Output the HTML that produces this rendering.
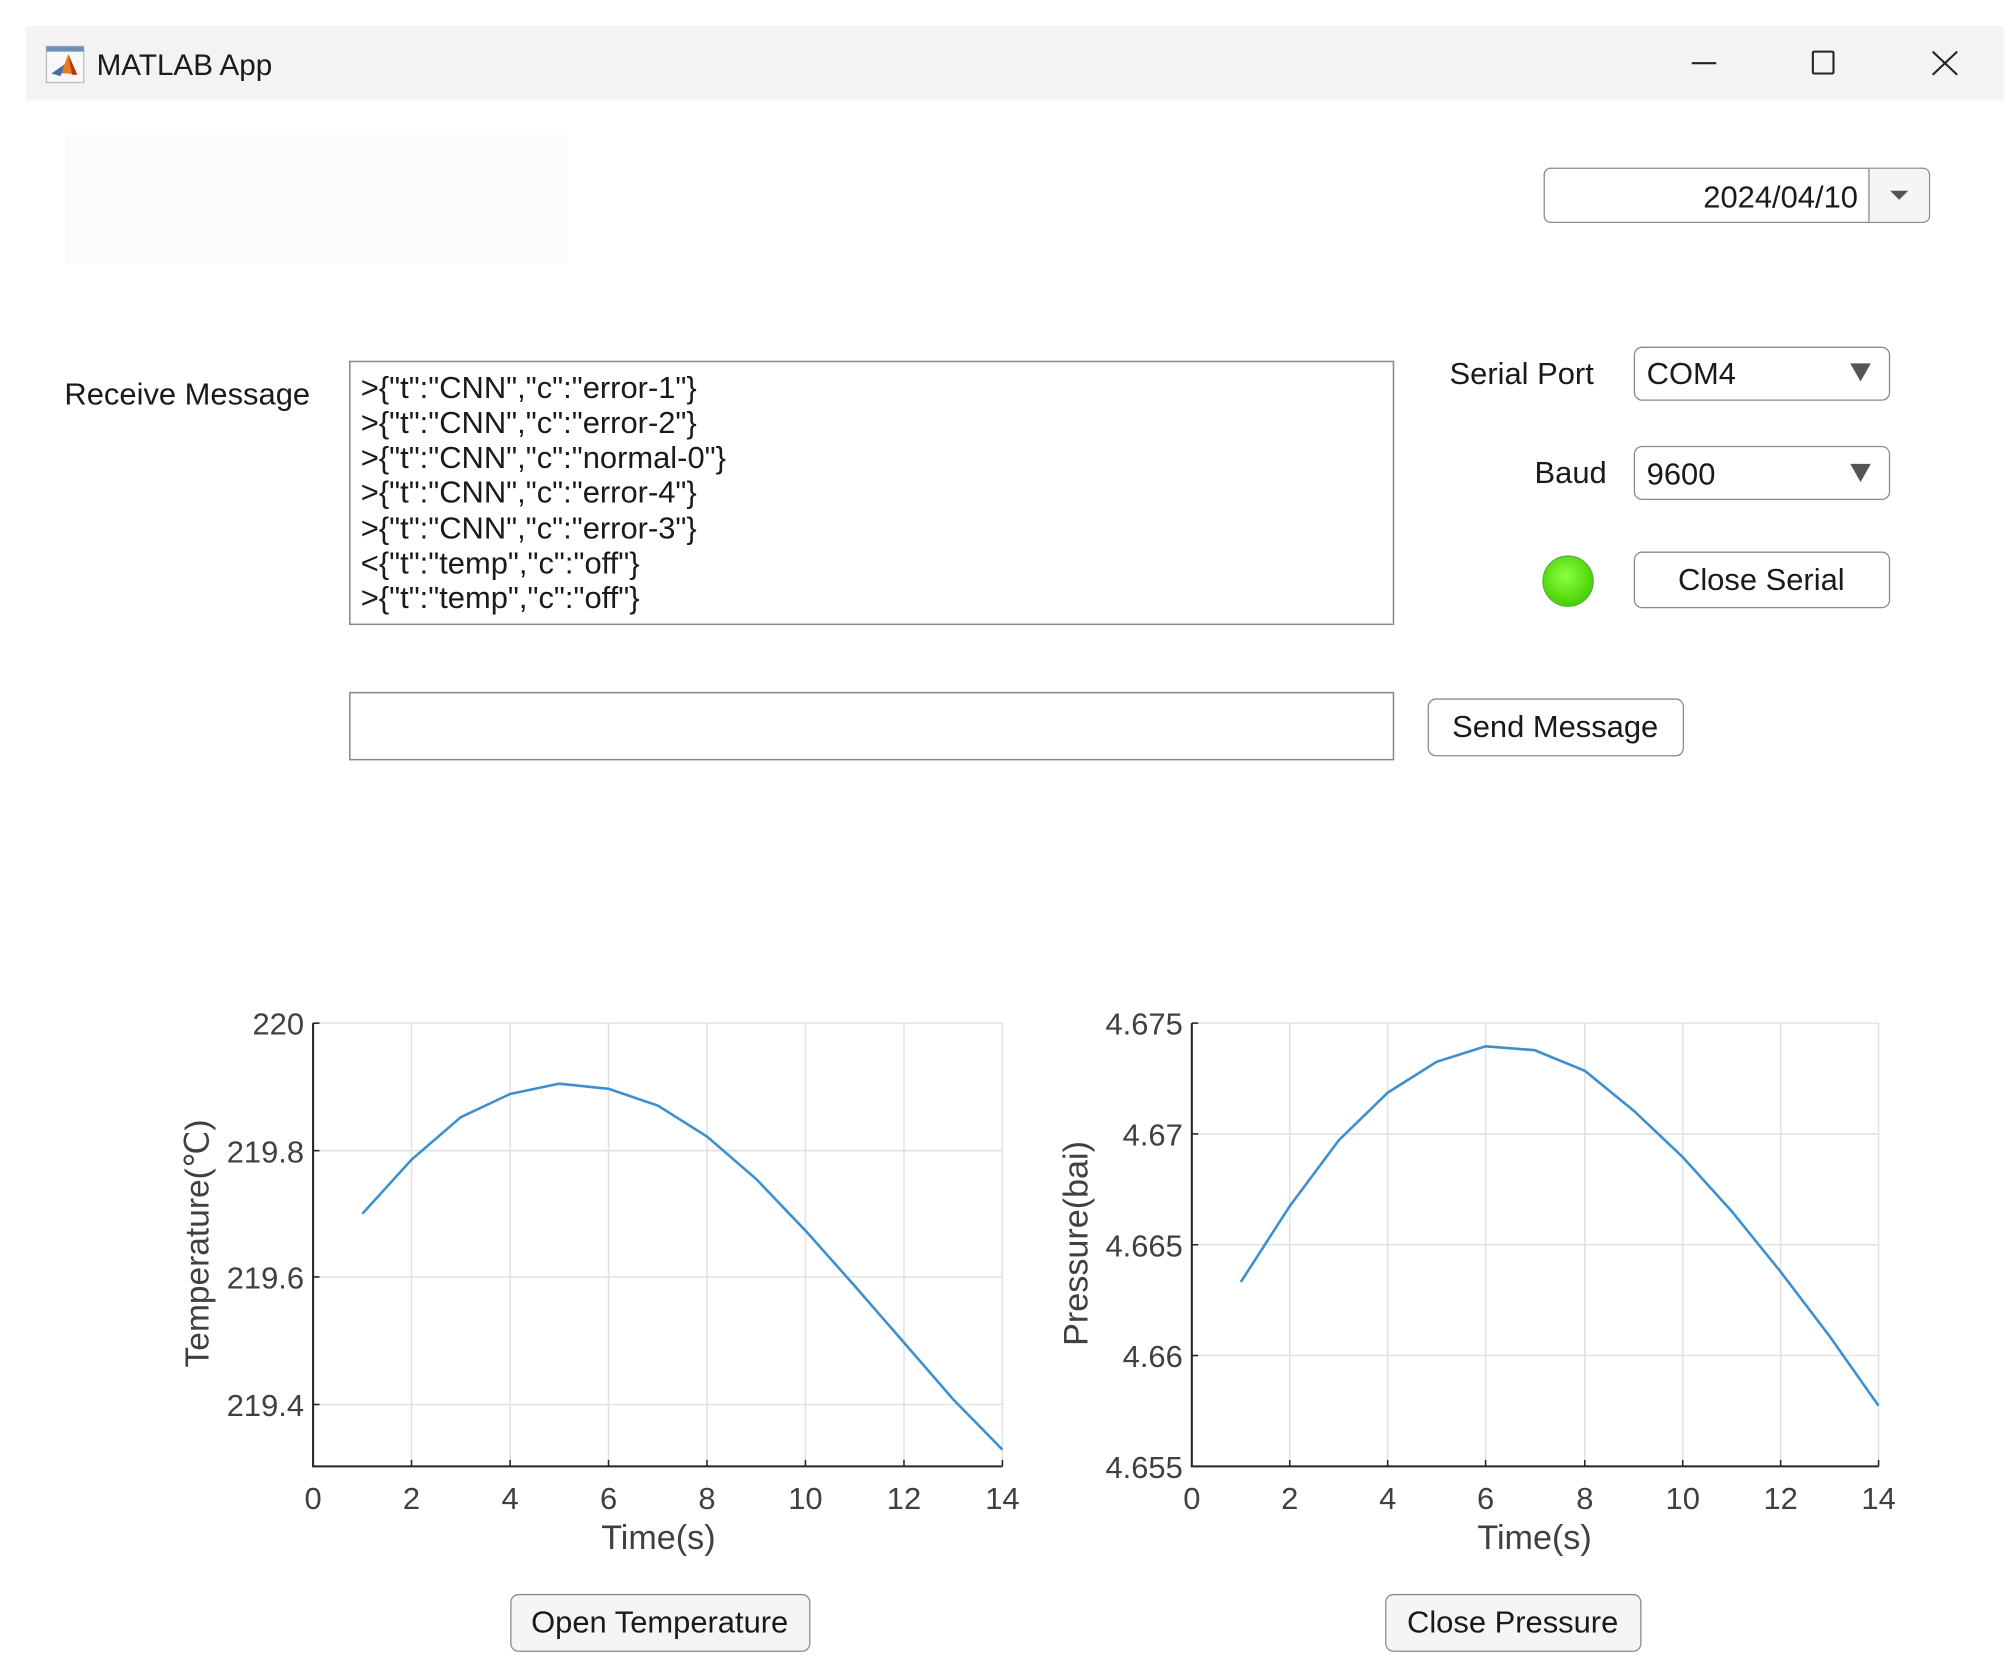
<!DOCTYPE html>
<html><head><meta charset="utf-8"><style>
html,body{margin:0;padding:0;background:#fff;width:2010px;height:1670px;overflow:hidden}
svg{display:block}
text{font-family:"Liberation Sans",Arial,sans-serif}
</style></head><body>
<svg width="2010" height="1670" viewBox="0 0 1560 1296" xmlns="http://www.w3.org/2000/svg">
<rect width="1560" height="1296" fill="#fff"/>
<!-- title bar -->
<rect x="20" y="20" width="1535" height="58" fill="#f3f3f3"/>
<rect x="36" y="36" width="29" height="28" fill="#f8f8f8" stroke="#bbb" stroke-width="1"/>
<rect x="36" y="36" width="29" height="4" fill="#6b8fb8"/>
<path d="M40 57 L50 50 L53 42 L60 58 L52 57 Z" fill="#e08020"/>
<path d="M40 57 L50 50 L47 59 Z" fill="#3a6fb0"/>
<path d="M53 42 L60 58 L56 58 Z" fill="#c03010"/>
<text x="75" y="58" font-size="23" fill="#1a1a1a">MATLAB App</text>
<line x1="1313" y1="49" x2="1332" y2="49" stroke="#222" stroke-width="1.6"/>
<rect x="1407" y="40" width="16" height="17" fill="none" stroke="#222" stroke-width="1.6" rx="1"/>
<path d="M1500 40 L1519 58 M1519 40 L1500 58" stroke="#222" stroke-width="1.6"/>
<!-- blurred area -->
<rect x="50" y="105" width="390" height="100" fill="#fbfbfb"/>
<!-- date picker -->
<rect x="1198.5" y="130.5" width="299" height="42" rx="5" fill="#fff" stroke="#8a8a8a"/>
<path d="M1450.5 131 V172 H1492 Q1497 172 1497 167 V136 Q1497 131 1492 131 Z" fill="#f5f5f5"/>
<line x1="1450.5" y1="131" x2="1450.5" y2="172" stroke="#8a8a8a"/>
<text x="1442" y="161" font-size="24" fill="#1a1a1a" text-anchor="end">2024/04/10</text>
<path d="M1467 148 L1481 148 L1474 155 Z" fill="#555"/>
<!-- receive message -->
<text x="50" y="314" font-size="24" fill="#1a1a1a">Receive Message</text>
<rect x="271.5" y="280.5" width="810" height="204" fill="#fff" stroke="#8a8a8a" stroke-width="1.2"/>
<g font-size="24" fill="#1a1a1a">
<text x="280" y="309">&gt;{"t":"CNN","c":"error-1"}</text>
<text x="280" y="336">&gt;{"t":"CNN","c":"error-2"}</text>
<text x="280" y="363">&gt;{"t":"CNN","c":"normal-0"}</text>
<text x="280" y="390">&gt;{"t":"CNN","c":"error-4"}</text>
<text x="280" y="418">&gt;{"t":"CNN","c":"error-3"}</text>
<text x="280" y="445">&lt;{"t":"temp","c":"off"}</text>
<text x="280" y="472">&gt;{"t":"temp","c":"off"}</text>
</g>
<!-- serial -->
<text x="1237" y="298" font-size="24" fill="#1a1a1a" text-anchor="end">Serial Port</text>
<rect x="1268.5" y="269.5" width="198" height="41" rx="6" fill="#fff" stroke="#8a8a8a"/>
<text x="1278" y="298" font-size="24" fill="#1a1a1a">COM4</text>
<path d="M1436 282 L1452 282 L1444 296 Z" fill="#555"/>
<text x="1247" y="375" font-size="24" fill="#1a1a1a" text-anchor="end">Baud</text>
<rect x="1268.5" y="346.5" width="198" height="41" rx="6" fill="#fff" stroke="#8a8a8a"/>
<text x="1278" y="376" font-size="24" fill="#1a1a1a">9600</text>
<path d="M1436 360 L1452 360 L1444 374 Z" fill="#555"/>
<defs><radialGradient id="g" cx="0.45" cy="0.4" r="0.6"><stop offset="0" stop-color="#8cff40"/><stop offset="1" stop-color="#44d000"/></radialGradient></defs>
<circle cx="1217" cy="451" r="19.5" fill="url(#g)" stroke="#5fb040" stroke-width="1"/>
<rect x="1268.5" y="428.5" width="198" height="43" rx="6" fill="#fff" stroke="#8a8a8a"/>
<text x="1367" y="458" font-size="24" fill="#1a1a1a" text-anchor="middle">Close Serial</text>
<!-- send -->
<rect x="271.5" y="537.5" width="810" height="52" fill="#fff" stroke="#8a8a8a" stroke-width="1.2"/>
<rect x="1108.5" y="542.5" width="198" height="44" rx="6" fill="#fff" stroke="#8a8a8a"/>
<text x="1207" y="572" font-size="24" fill="#1a1a1a" text-anchor="middle">Send Message</text>
<!-- plot 1 -->
<g stroke="#e2e2e2" stroke-width="1.2">
<line x1="319.4" y1="794" x2="319.4" y2="1138"/><line x1="395.9" y1="794" x2="395.9" y2="1138"/><line x1="472.3" y1="794" x2="472.3" y2="1138"/><line x1="548.7" y1="794" x2="548.7" y2="1138"/><line x1="625.1" y1="794" x2="625.1" y2="1138"/><line x1="701.6" y1="794" x2="701.6" y2="1138"/><line x1="778" y1="794" x2="778" y2="1138"/>
<line x1="243" y1="794" x2="778" y2="794"/><line x1="243" y1="893" x2="778" y2="893"/><line x1="243" y1="991" x2="778" y2="991"/><line x1="243" y1="1090" x2="778" y2="1090"/>
</g>
<path d="M243 794 V1138 H778" fill="none" stroke="#262626" stroke-width="1.6"/>
<g stroke="#262626" stroke-width="1.2">
<line x1="243" y1="794" x2="248" y2="794"/><line x1="243" y1="893" x2="248" y2="893"/><line x1="243" y1="991" x2="248" y2="991"/><line x1="243" y1="1090" x2="248" y2="1090"/>
<line x1="319.4" y1="1138" x2="319.4" y2="1133"/><line x1="395.9" y1="1138" x2="395.9" y2="1133"/><line x1="472.3" y1="1138" x2="472.3" y2="1133"/><line x1="548.7" y1="1138" x2="548.7" y2="1133"/><line x1="625.1" y1="1138" x2="625.1" y2="1133"/><line x1="701.6" y1="1138" x2="701.6" y2="1133"/><line x1="778" y1="1138" x2="778" y2="1133"/>
</g>
<polyline fill="none" stroke="#3d8fd0" stroke-width="2" points="281.2,942 319.4,900 357.6,867 395.9,849 434.1,841 472.3,845 510.5,858 548.7,882 586.9,915 625.1,955 663.4,998 701.6,1042 739.8,1086 778,1125"/>
<g font-size="24" fill="#404040" text-anchor="end">
<text x="236" y="803">220</text><text x="236" y="902">219.8</text><text x="236" y="1000">219.6</text><text x="236" y="1099">219.4</text>
</g>
<g font-size="24" fill="#404040" text-anchor="middle">
<text x="243" y="1171">0</text><text x="319.4" y="1171">2</text><text x="395.9" y="1171">4</text><text x="472.3" y="1171">6</text><text x="548.7" y="1171">8</text><text x="625.1" y="1171">10</text><text x="701.6" y="1171">12</text><text x="778" y="1171">14</text>
<text x="511" y="1202" font-size="26.5">Time(s)</text>
<text transform="translate(162,965) rotate(-90)" font-size="26">Temperature(℃)</text>
</g>
<!-- plot 2 -->
<g stroke="#e2e2e2" stroke-width="1.2">
<line x1="1001" y1="794" x2="1001" y2="1138"/><line x1="1077" y1="794" x2="1077" y2="1138"/><line x1="1153" y1="794" x2="1153" y2="1138"/><line x1="1230" y1="794" x2="1230" y2="1138"/><line x1="1306" y1="794" x2="1306" y2="1138"/><line x1="1382" y1="794" x2="1382" y2="1138"/><line x1="1458" y1="794" x2="1458" y2="1138"/>
<line x1="925" y1="794" x2="1458" y2="794"/><line x1="925" y1="880" x2="1458" y2="880"/><line x1="925" y1="966" x2="1458" y2="966"/><line x1="925" y1="1052" x2="1458" y2="1052"/>
</g>
<path d="M925 794 V1138 H1458" fill="none" stroke="#262626" stroke-width="1.6"/>
<g stroke="#262626" stroke-width="1.2">
<line x1="925" y1="794" x2="930" y2="794"/><line x1="925" y1="880" x2="930" y2="880"/><line x1="925" y1="966" x2="930" y2="966"/><line x1="925" y1="1052" x2="930" y2="1052"/>
<line x1="1001" y1="1138" x2="1001" y2="1133"/><line x1="1077" y1="1138" x2="1077" y2="1133"/><line x1="1153" y1="1138" x2="1153" y2="1133"/><line x1="1230" y1="1138" x2="1230" y2="1133"/><line x1="1306" y1="1138" x2="1306" y2="1133"/><line x1="1382" y1="1138" x2="1382" y2="1133"/><line x1="1458" y1="1138" x2="1458" y2="1133"/>
</g>
<polyline fill="none" stroke="#3d8fd0" stroke-width="2" points="963,995 1001,936 1039,885 1077,848 1115,824 1153,812 1191,815 1230,831 1268,862 1306,898 1344,940 1382,987 1420,1037 1458,1091"/>
<g font-size="24" fill="#404040" text-anchor="end">
<text x="918" y="803">4.675</text><text x="918" y="889">4.67</text><text x="918" y="975">4.665</text><text x="918" y="1061">4.66</text><text x="918" y="1147">4.655</text>
</g>
<g font-size="24" fill="#404040" text-anchor="middle">
<text x="925" y="1171">0</text><text x="1001" y="1171">2</text><text x="1077" y="1171">4</text><text x="1153" y="1171">6</text><text x="1230" y="1171">8</text><text x="1306" y="1171">10</text><text x="1382" y="1171">12</text><text x="1458" y="1171">14</text>
<text x="1191" y="1202" font-size="26.5">Time(s)</text>
<text transform="translate(844,965) rotate(-90)" font-size="26.5">Pressure(bai)</text>
</g>
<!-- buttons -->
<rect x="396.5" y="1237.5" width="232" height="44" rx="6" fill="#f5f5f5" stroke="#8a8a8a"/>
<text x="512" y="1267" font-size="24" fill="#1a1a1a" text-anchor="middle">Open Temperature</text>
<rect x="1075.5" y="1237.5" width="198" height="44" rx="6" fill="#f5f5f5" stroke="#8a8a8a"/>
<text x="1174" y="1267" font-size="24" fill="#1a1a1a" text-anchor="middle">Close Pressure</text>
</svg>
</body></html>
